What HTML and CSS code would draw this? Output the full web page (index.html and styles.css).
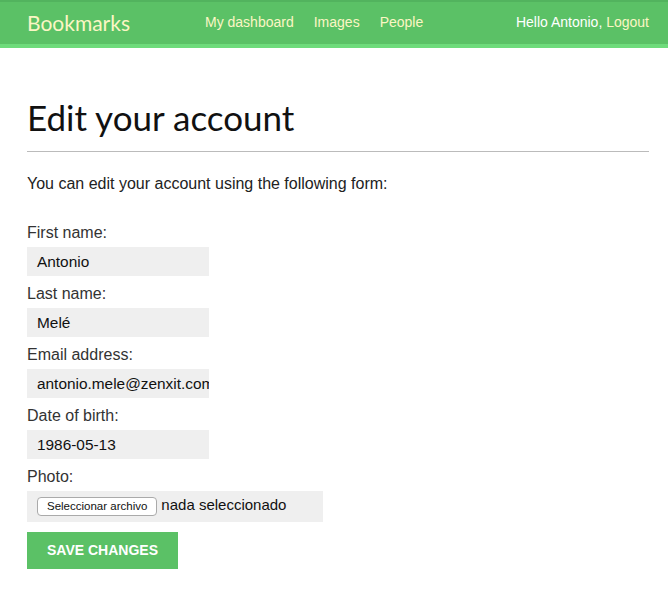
FILE: index.html
```html
<!DOCTYPE html>
<html>
<head>
<meta charset="utf-8">
<link rel="stylesheet" href="styles.css">
</head>
<body>
<header class="header">
  <span class="logo">Bookmarks</span>
  <nav class="menu">
    <a href="#">My dashboard</a>
    <a href="#">Images</a>
    <a href="#">People</a>
  </nav>
  <span class="user">Hello Antonio, <a href="#">Logout</a></span>
</header>
<main class="content">
  <h1 class="title">Edit your account</h1>
  <p class="intro">You can edit your account using the following form:</p>
  <form class="form">
    <div class="field">
      <label class="label">First name:</label>
      <div class="input">Antonio</div>
    </div>
    <div class="field">
      <label class="label">Last name:</label>
      <div class="input">Melé</div>
    </div>
    <div class="field">
      <label class="label">Email address:</label>
      <div class="input">antonio.mele@zenxit.com</div>
    </div>
    <div class="field">
      <label class="label">Date of birth:</label>
      <div class="input">1986-05-13</div>
    </div>
    <div class="field">
      <label class="label">Photo:</label>
      <div class="file"><span class="file-btn">Seleccionar archivo</span><span class="file-name">nada seleccionado</span></div>
    </div>
    <div class="submit">SAVE CHANGES</div>
  </form>
</main>
</body>
</html>
```
FILE: styles.css
```css
html, body { margin: 0; padding: 0; background: #fff; }
body { font-family: "Liberation Sans", Arial, sans-serif; color: #222; }
a { text-decoration: none; color: inherit; }

.header {
  display: flex;
  align-items: center;
  height: 42px;
  background: #5bc166;
  border-top: 2px solid #52b35e;
  border-bottom: 4px solid #6edb7b;
  padding: 0 19px 0 27px;
}
.logo {
  font-family: "Lato", sans-serif;
  font-size: 21px;
  color: #fbf6c4;
  width: 178px;
  margin-top: -2px;
}
.menu { display: flex; gap: 20px; font-size: 14px; color: #fbf6c4; flex: 1; margin-top: -2px; }
.user { font-size: 14px; color: #fff; margin-top: -2px; }
.user a { color: #fbf6c4; }

.content { padding: 0 19px 0 27px; }
.title {
  font-family: "Lato", sans-serif;
  font-weight: 400;
  font-size: 35px;
  line-height: 42px;
  margin: 0;
  padding: 48px 0 13px;
  color: #111;
  border-bottom: 1px solid #bbb;
}
.intro { font-size: 16px; line-height: 20px; margin: 22px 0 29px; }
.form { display: flex; flex-direction: column; }
.field { display: flex; flex-direction: column; gap: 4px; margin-bottom: 8px; }
.label { font-size: 16px; line-height: 20px; color: #333; }
.input {
  width: 172px;
  height: 29px;
  line-height: 29px;
  padding-left: 10px;
  background: #efefef;
  font-size: 15.4px;
  color: #111;
  overflow: hidden;
  white-space: nowrap;
}
.file {
  width: 286px;
  height: 31px;
  padding-left: 10px;
  background: #efefef;
  display: flex;
  align-items: center;
  gap: 4px;
}
.file-btn {
  font-size: 11.5px;
  line-height: 17px;
  padding: 0 9px;
  background: #fff;
  border: 1px solid #aaa;
  border-radius: 4px;
  color: #111;
}
.file-name { font-size: 15px; color: #111; margin-top: -4px; }
.submit {
  width: 151px;
  height: 37px;
  line-height: 37px;
  margin-top: 2px;
  text-align: center;
  background: #5bc166;
  color: #fff;
  font-weight: bold;
  font-size: 14px;
}
```
